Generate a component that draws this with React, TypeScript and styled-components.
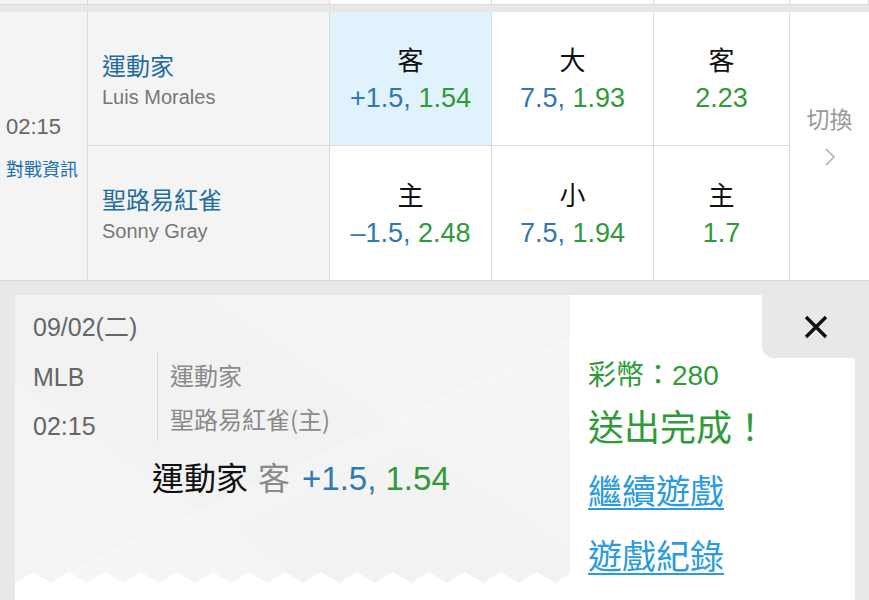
import React from 'react'
import styled, { createGlobalStyle } from 'styled-components'

const GlobalStyle = createGlobalStyle`
  html, body {
    margin: 0;
    padding: 0;
    background: #e8e8e8;
  }
  body {
    font-family: "Liberation Sans", "Noto Sans CJK TC", sans-serif;
  }
`

const BLUE = '#2f78b1'
const GREEN = '#2e9a38'
const LINE = '#d6dce1'

const Page = styled.div`
  width: 869px;
  height: 600px;
  overflow: hidden;
  background: #e8e8e8;
`

/*** TABLE ***/
const Cols = `88px 242px 162px 162px 136px 1fr`

const PrevRow = styled.div`
  display: grid;
  grid-template-columns: ${Cols};
  height: 4px;
  background: #fff;
  & > div { border-right: 1px solid ${LINE}; }
  & > div:first-child, & > div:nth-child(2) { background: #f4f4f4; }
`

const Separator = styled.div`
  height: 7px;
  background: #e7e7e7;
  border-top: 1px solid #dddddd;
`

const MatchRow = styled.div`
  display: grid;
  grid-template-columns: ${Cols};
  grid-template-rows: 134px 134px;
  background: #fff;
  border-bottom: 1px solid ${LINE};
`

const TimeCell = styled.div`
  grid-row: 1 / span 2;
  background: #f4f4f4;
  border-right: 1px solid ${LINE};
  display: flex;
  flex-direction: column;
  justify-content: center;
  padding-left: 6px;
`

const Time = styled.div`
  font-size: 22px;
  line-height: 28px;
  color: #666;
`

const MatchInfo = styled.div`
  font-size: 18px;
  line-height: 24px;
  margin-top: 15px;
  color: #1f6fae;
  font-family: "Noto Sans CJK TC", sans-serif;
`

const TeamCell = styled.div<{ $top?: boolean }>`
  background: #f4f4f4;
  border-right: 1px solid ${LINE};
  border-bottom: ${p => (p.$top ? `1px solid ${LINE}` : 'none')};
  display: flex;
  flex-direction: column;
  justify-content: center;
  padding-left: 14px;
`

const TeamName = styled.div`
  font-family: "Noto Sans CJK TC", sans-serif;
  font-size: 24px;
  line-height: 32px;
  color: #246c9f;
`

const Pitcher = styled.div`
  font-size: 20px;
  line-height: 24px;
  margin-top: 4px;
  color: #777;
`

const OddsCell = styled.div<{ $top?: boolean; $active?: boolean }>`
  background: ${p => (p.$active ? '#e0f2fc' : '#fff')};
  border-right: 1px solid ${LINE};
  border-bottom: ${p => (p.$top ? `1px solid ${LINE}` : 'none')};
  display: flex;
  flex-direction: column;
  justify-content: center;
  align-items: center;
`

const OddsLabel = styled.div`
  font-family: "Noto Sans CJK TC", sans-serif;
  font-size: 26px;
  line-height: 34px;
  color: #111;
`

const OddsValue = styled.div`
  font-size: 27px;
  line-height: 34px;
  margin-top: 5px;
  white-space: nowrap;
`

const Line = styled.span`
  color: ${BLUE};
`

const Price = styled.span`
  color: ${GREEN};
`

const SwitchCell = styled.div`
  grid-row: 1 / span 2;
  grid-column: 6;
  display: flex;
  flex-direction: column;
  align-items: center;
  justify-content: center;
  padding-bottom: 22px;
  color: #9a9a9a;
`

const SwitchText = styled.div`
  font-family: "Noto Sans CJK TC", sans-serif;
  font-size: 23px;
  line-height: 30px;
`

const Chevron = styled.svg`
  margin-top: 14px;
`

/*** POPUP ***/
const Overlay = styled.div`
  padding: 14px 14px 0 15px;
`

const Panel = styled.div`
  position: relative;
  display: flex;
  height: 320px;
  background: #fff;
`

const Ticket = styled.div`
  position: relative;
  width: 555px;
  height: 288px;
  box-sizing: border-box;
  padding: 17px 0 0 18px;
  background:
    linear-gradient(155deg, rgba(255,255,255,0) 55%, rgba(255,255,255,0.18) 55%, rgba(255,255,255,0) 80%),
    linear-gradient(35deg, rgba(255,255,255,0.18) 30%, rgba(255,255,255,0) 30%, rgba(255,255,255,0) 62%, rgba(255,255,255,0.15) 62%),
    #f2f2f2;
  &::after {
    content: '';
    position: absolute;
    left: 0;
    right: 0;
    bottom: 0;
    height: 11px;
    background: conic-gradient(from 121deg at 50% 0, #fff 118deg, transparent 0);
    background-size: 36px 11px;
    background-repeat: repeat-x;
  }
`

const DateText = styled.div`
  font-size: 25px;
  line-height: 30px;
  color: #666;
`

const InfoRow = styled.div`
  display: flex;
  align-items: flex-start;
  margin-top: 11px;
`

const LeagueCol = styled.div`
  width: 124px;
  font-size: 25px;
  line-height: 49px;
  color: #666;
`

const TeamsCol = styled.div`
  border-left: 1px solid #d8d8d8;
  padding-left: 12px;
  font-family: "Noto Sans CJK TC", sans-serif;
  font-size: 24px;
  line-height: 44px;
  color: #8a8a8a;
`

const BetLine = styled.div`
  margin: 5px 0 0 119px;
  font-size: 33px;
  line-height: 40px;
  white-space: nowrap;
`

const BetTeam = styled.span`
  font-family: "Noto Sans CJK TC", sans-serif;
  font-size: 32px;
  color: #111;
`

const BetSide = styled.span`
  font-family: "Noto Sans CJK TC", sans-serif;
  font-size: 32px;
  color: #8a8a8a;
  margin: 0 12px 0 10px;
`

const Result = styled.div`
  flex: 1;
  padding: 60px 0 0 18px;
  font-family: "Noto Sans CJK TC", sans-serif;
`

const Coins = styled.div`
  font-size: 28px;
  line-height: 36px;
  color: ${GREEN};
  & > span {
    font-family: "Liberation Sans", sans-serif;
  }
`

const Done = styled.div`
  font-size: 36px;
  line-height: 44px;
  margin-top: 9px;
  color: ${GREEN};
`

const ActionLink = styled.a`
  display: block;
  width: fit-content;
  font-size: 34px;
  line-height: 44px;
  color: #2b9ae0;
  text-decoration: underline;
  text-underline-offset: 4px;
  text-decoration-thickness: 2px;
  margin-top: 21px;
  cursor: pointer;
`

const CloseTab = styled.div`
  position: absolute;
  top: 0;
  right: 0;
  width: 93px;
  height: 63px;
  background: #e8e8e8;
  border-bottom-left-radius: 12px;
  display: flex;
  align-items: center;
  justify-content: center;
  padding-left: 14px;
  box-sizing: border-box;
`

export default function App() {
  return (
    <>
      <GlobalStyle />
      <Page>
        <PrevRow>
          <div /><div /><div /><div /><div /><div />
        </PrevRow>
        <Separator />

        <MatchRow>
          <TimeCell>
            <Time>02:15</Time>
            <MatchInfo>對戰資訊</MatchInfo>
          </TimeCell>

          <TeamCell $top>
            <TeamName>運動家</TeamName>
            <Pitcher>Luis Morales</Pitcher>
          </TeamCell>
          <OddsCell $top $active>
            <OddsLabel>客</OddsLabel>
            <OddsValue><Line>+1.5, </Line><Price>1.54</Price></OddsValue>
          </OddsCell>
          <OddsCell $top>
            <OddsLabel>大</OddsLabel>
            <OddsValue><Line>7.5, </Line><Price>1.93</Price></OddsValue>
          </OddsCell>
          <OddsCell $top>
            <OddsLabel>客</OddsLabel>
            <OddsValue><Price>2.23</Price></OddsValue>
          </OddsCell>

          <SwitchCell>
            <SwitchText>切換</SwitchText>
            <Chevron width="12" height="20" viewBox="0 0 12 20">
              <polyline points="2,2 10,10 2,18" fill="none" stroke="#b0b0b0" strokeWidth="1.6" />
            </Chevron>
          </SwitchCell>

          <TeamCell>
            <TeamName>聖路易紅雀</TeamName>
            <Pitcher>Sonny Gray</Pitcher>
          </TeamCell>
          <OddsCell>
            <OddsLabel>主</OddsLabel>
            <OddsValue><Line>–1.5, </Line><Price>2.48</Price></OddsValue>
          </OddsCell>
          <OddsCell>
            <OddsLabel>小</OddsLabel>
            <OddsValue><Line>7.5, </Line><Price>1.94</Price></OddsValue>
          </OddsCell>
          <OddsCell>
            <OddsLabel>主</OddsLabel>
            <OddsValue><Price>1.7</Price></OddsValue>
          </OddsCell>
        </MatchRow>

        <Overlay>
          <Panel>
            <Ticket>
              <DateText>09/02(二)</DateText>
              <InfoRow>
                <LeagueCol>
                  <div>MLB</div>
                  <div>02:15</div>
                </LeagueCol>
                <TeamsCol>
                  <div>運動家</div>
                  <div>聖路易紅雀(主)</div>
                </TeamsCol>
              </InfoRow>
              <BetLine>
                <BetTeam>運動家</BetTeam>
                <BetSide>客</BetSide>
                <Line>+1.5, </Line><Price>1.54</Price>
              </BetLine>
            </Ticket>

            <Result>
              <Coins>彩幣：<span>280</span></Coins>
              <Done>送出完成！</Done>
              <ActionLink>繼續遊戲</ActionLink>
              <ActionLink>遊戲紀錄</ActionLink>
            </Result>

            <CloseTab>
              <svg width="26" height="26" viewBox="0 0 26 26">
                <path d="M3 3 L23 23 M23 3 L3 23" stroke="#111" strokeWidth="3.4" strokeLinecap="butt" />
              </svg>
            </CloseTab>
          </Panel>
        </Overlay>
      </Page>
    </>
  )
}
